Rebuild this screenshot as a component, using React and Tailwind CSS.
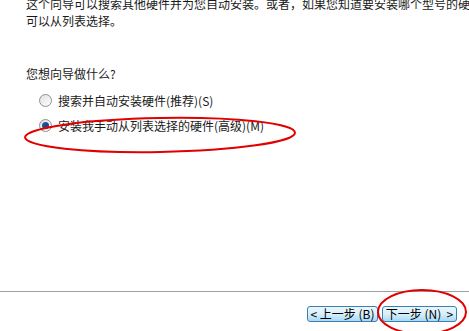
import React from "react";

const font = { fontFamily: '"Noto Sans CJK SC", "Noto Sans", sans-serif' };

const Radio = ({ checked }) => (
  <span className="w-[13px] h-[13px] rounded-full border border-[#8e8f8f] bg-gradient-to-br from-[#e0e0e0] to-white flex items-center justify-center shrink-0">
    {checked && <span className="w-[7px] h-[7px] rounded-full bg-gradient-to-br from-[#2a5fa8] to-[#0c3a7a]" />}
  </span>
);

const Button = ({ children, width }) => (
  <button className={`h-[16px] ${width} border border-[#3c7fb1] rounded-[3px] bg-gradient-to-b from-[#eaf6fd] via-[#d9f0fc] to-[#a7d9f5] text-[12px] leading-none text-black flex items-center justify-center whitespace-pre`}>
    {children}
  </button>
);

export default function App() {
  return (
    <div className="relative w-[469px] h-[331px] bg-white overflow-hidden text-[#1a1a1a]" style={font}>
      <div className="flex flex-col h-full">
        <div className="pl-[26px] pr-0 -mt-[5px] text-[12px] leading-[17px] whitespace-nowrap">
          <div>这个向导可以搜索其他硬件并为您自动安装。或者，如果您知道要安装哪个型号的硬件，</div>
          <div>可以从列表选择。</div>
        </div>
        <div className="pl-[26px] mt-[36px] text-[12px] leading-[17px]">您想向导做什么?</div>
        <div className="pl-[39px] mt-[10px] flex flex-col gap-[8px] text-[12px] leading-[17px]">
          <label className="flex items-center gap-[6px]">
            <Radio />
            <span>搜索并自动安装硬件(推荐)(S)</span>
          </label>
          <label className="flex items-center gap-[6px]">
            <Radio checked />
            <span>安装我手动从列表选择的硬件(高级)(M)</span>
          </label>
        </div>
        <div className="flex-1" />
        <div className="h-px bg-[#a0a0a0]" />
        <div className="flex justify-end gap-[4px] pr-[12px] pt-[14px] pb-[9px]">
          <Button width="w-[71px]">{"< 上一步 (B)"}</Button>
          <Button width="w-[75px]">{"下一步 (N)  >"}</Button>
        </div>
      </div>
      <svg className="absolute inset-0 pointer-events-none" width="469" height="331">
        <ellipse cx="160" cy="135" rx="135" ry="17" fill="none" stroke="#e00000" strokeWidth="2" transform="rotate(-1 160 135)" />
        <ellipse cx="422" cy="312" rx="44" ry="22" fill="none" stroke="#e00000" strokeWidth="2" />
      </svg>
    </div>
  );
}
